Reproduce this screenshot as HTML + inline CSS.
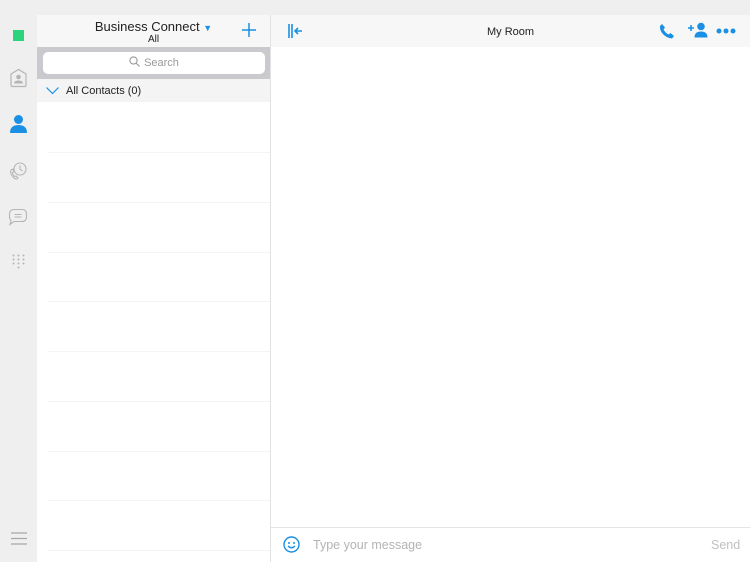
<!DOCTYPE html>
<html><head><meta charset="utf-8"><style>
*{margin:0;padding:0;box-sizing:border-box}
body{width:750px;height:562px;overflow:hidden;background:#fff;font-family:"Liberation Sans",sans-serif;position:relative}
.abs{position:absolute}
.ln{position:absolute;left:48px;width:222px;height:1px;background:#f4f4f4}
</style></head><body>
<div class="abs" style="left:0;top:0;width:750px;height:15px;background:#efefef"></div>
<div class="abs" style="left:0;top:0;width:37px;height:562px;background:#efefef"></div>
<div class="abs" style="left:13px;top:30px;width:11px;height:11px;background:#2bd47a"></div>
<svg class="abs" style="left:9px;top:68px" width="19" height="20" viewBox="0 0 19 20"><path d="M2 6 L9.5 1.5 L17 6 V17 Q17 18.5 15.5 18.5 H3.5 Q2 18.5 2 17Z" fill="none" stroke="#b5b5b5" stroke-width="1.2"/><circle cx="9.5" cy="9" r="2.3" fill="#b5b5b5"/><path d="M5 15.5 Q5 12.5 9.5 12.5 Q14 12.5 14 15.5Z" fill="#b5b5b5"/></svg>
<svg class="abs" style="left:9px;top:114px" width="19" height="19" viewBox="0 0 19 19"><circle cx="9.5" cy="5.5" r="4.5" fill="#1a8fe3"/><path d="M1 19 Q1 11 9.5 11 Q18 11 18 19Z" fill="#1a8fe3"/></svg>
<svg class="abs" style="left:8px;top:161px" width="20" height="20" viewBox="0 0 20 20"><circle cx="12" cy="8" r="6" fill="none" stroke="#b5b5b5" stroke-width="1.1"/><path d="M12 4.5V8L14.5 10" fill="none" stroke="#b5b5b5" stroke-width="1.1"/><path d="M3 9 Q1.5 13 6 17 Q9 19 10 17 L8 15 L6.5 15.5 Q4.5 13.5 4.5 11.5 L6 10.5 L5 8Z" fill="none" stroke="#b5b5b5" stroke-width="1.1"/></svg>
<svg class="abs" style="left:8px;top:208px" width="20" height="18" viewBox="0 0 20 18"><path d="M6 1.5 H14 Q18.5 1.5 18.5 6.5 V8.5 Q18.5 13.5 14 13.5 H6 L2 16.5 L3 12.5 Q1.5 11 1.5 8.5 V6.5 Q1.5 1.5 6 1.5Z" fill="none" stroke="#b5b5b5" stroke-width="1.1"/><path d="M6.5 6.5H13.5M6.5 9H13.5" stroke="#b5b5b5" stroke-width="1.1"/></svg>
<svg class="abs" style="left:12px;top:254px" width="13" height="16" viewBox="0 0 13 16"><g fill="#b5b5b5"><circle cx="1.5" cy="1.5" r="1"/><circle cx="6.5" cy="1.5" r="1"/><circle cx="11.5" cy="1.5" r="1"/><circle cx="1.5" cy="5.5" r="1"/><circle cx="6.5" cy="5.5" r="1"/><circle cx="11.5" cy="5.5" r="1"/><circle cx="1.5" cy="9.5" r="1"/><circle cx="6.5" cy="9.5" r="1"/><circle cx="11.5" cy="9.5" r="1"/><circle cx="6.5" cy="13.5" r="1"/></g></svg>
<svg class="abs" style="left:11px;top:532px" width="16" height="13" viewBox="0 0 16 13"><path d="M0 1H16M0 6.5H16M0 12H16" stroke="#a8a8a8" stroke-width="1.2"/></svg>
<div class="abs" style="left:37px;top:15px;width:233px;height:32px;background:#f7f7f7"></div>
<div class="abs" style="left:37px;top:19px;width:233px;text-align:center;font-size:13px;color:#222">Business Connect <span style="color:#1a8fe3;font-size:9px">&#9660;</span></div>
<div class="abs" style="left:37px;top:34px;width:233px;text-align:center;font-size:10px;color:#222">All</div>
<svg class="abs" style="left:242px;top:23px" width="14" height="14" viewBox="0 0 14 14"><path d="M7 0V14M0 7H14" stroke="#1a8fe3" stroke-width="1.5"/></svg>
<div class="abs" style="left:37px;top:47px;width:233px;height:32px;background:#cacace"></div>
<div class="abs" style="left:43px;top:52px;width:222px;height:22px;background:#fff;border-radius:5px;text-align:center;font-size:11px;color:#999;line-height:22px"><svg width="11" height="11" viewBox="0 0 11 11" style="vertical-align:-1px;margin-right:4px"><circle cx="4.5" cy="4.5" r="3.6" fill="none" stroke="#999" stroke-width="1.1"/><path d="M7 7L10.5 10.5" stroke="#999" stroke-width="1.1"/></svg>Search</div>
<div class="abs" style="left:37px;top:79px;width:233px;height:23px;background:#f4f4f4"></div>
<svg class="abs" style="left:46px;top:87px" width="13" height="8" viewBox="0 0 13 8"><path d="M0.5 0.5L6.5 6.5L12.5 0.5" fill="none" stroke="#1a8fe3" stroke-width="1.2"/></svg>
<div class="abs" style="left:66px;top:85px;font-size:11px;color:#222">All Contacts (0)</div>
<div class="ln" style="top:152px"></div>
<div class="ln" style="top:202px"></div>
<div class="ln" style="top:252px"></div>
<div class="ln" style="top:301px"></div>
<div class="ln" style="top:351px"></div>
<div class="ln" style="top:401px"></div>
<div class="ln" style="top:451px"></div>
<div class="ln" style="top:500px"></div>
<div class="ln" style="top:550px"></div>
<div class="abs" style="left:270px;top:15px;width:1px;height:547px;background:#e2e2e2"></div>
<div class="abs" style="left:271px;top:15px;width:479px;height:32px;background:#f7f7f7"></div>
<svg class="abs" style="left:288px;top:24px" width="15" height="14" viewBox="0 0 15 14"><path d="M1 0V14M4 0V14" stroke="#1a8fe3" stroke-width="1.6"/><path d="M14 7H7M10 4L7 7L10 10" fill="none" stroke="#1a8fe3" stroke-width="1.6"/></svg>
<div class="abs" style="left:271px;top:26px;width:479px;text-align:center;font-size:11px;color:#222">My Room</div>
<svg class="abs" style="left:659px;top:23px" width="16" height="16" viewBox="0 0 16 16"><path d="M3 1 L6 4.5 L4.5 6.5 Q6.5 10 9.5 11.5 L11.5 10 L15 13 L13 15.5 Q7 15 3 10 Q0.5 6 1 3Z" fill="#1a8fe3"/></svg>
<svg class="abs" style="left:688px;top:22px" width="20" height="16" viewBox="0 0 20 16"><path d="M0 6H6M3 3V9" stroke="#1a8fe3" stroke-width="1.6"/><circle cx="13" cy="4.5" r="3.8" fill="#1a8fe3"/><path d="M6.5 15.5 Q6.5 9.5 13 9.5 Q19.5 9.5 19.5 15.5Z" fill="#1a8fe3"/></svg>
<svg class="abs" style="left:716px;top:28px" width="20" height="6" viewBox="0 0 20 6"><g fill="#1a8fe3"><circle cx="3" cy="3" r="2.5"/><circle cx="10" cy="3" r="2.5"/><circle cx="17" cy="3" r="2.5"/></g></svg>
<div class="abs" style="left:271px;top:527px;width:479px;height:1px;background:#e4e4e4"></div>
<svg class="abs" style="left:283px;top:536px" width="17" height="17" viewBox="0 0 17 17"><circle cx="8.5" cy="8.5" r="7.5" fill="none" stroke="#1a8fe3" stroke-width="1.4"/><circle cx="6" cy="7" r="1" fill="#1a8fe3"/><circle cx="11" cy="7" r="1" fill="#1a8fe3"/><path d="M5 10Q8.5 13.5 12 10" fill="none" stroke="#1a8fe3" stroke-width="1.3"/></svg>
<div class="abs" style="left:313px;top:538px;font-size:12.5px;color:#b3b3b3">Type your message</div>
<div class="abs" style="left:711px;top:538px;font-size:12.5px;color:#c0c0c0">Send</div>
</body></html>
